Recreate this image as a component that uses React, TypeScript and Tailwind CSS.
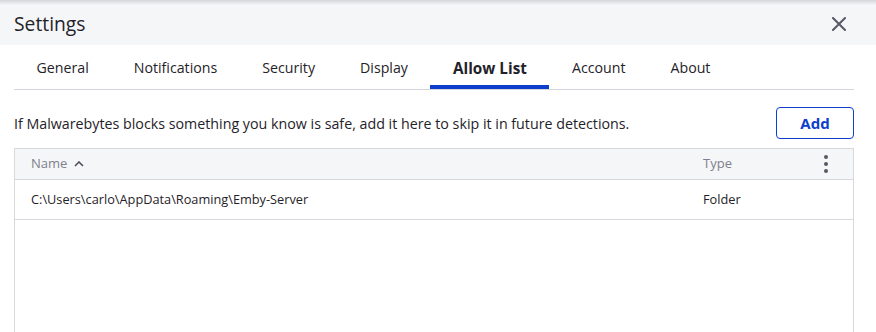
import React from "react";

export default function App() {
  const tabs = ["General", "Notifications", "Security", "Display", "Allow List", "Account", "About"];
  return (
    <div className="w-[876px] h-[332px] overflow-hidden bg-white text-[#1f2329]" style={{ fontFamily: '"Open Sans", "Noto Sans", sans-serif' }}>
      <div className="h-[45px] bg-[#f5f6f8] relative flex items-center justify-between pl-[14px] pr-[30px]">
        <div className="absolute left-0 right-0 top-0 h-[5px] bg-gradient-to-b from-[#d4d5d8] to-[#f5f6f8]" />
        <span className="text-[19.3px] pt-[4px]">Settings</span>
        <svg width="14" height="14" viewBox="0 0 14 14" className="mt-[3px]">
          <path d="M1 1 L13 13 M13 1 L1 13" stroke="#555a66" strokeWidth="2" strokeLinecap="square" />
        </svg>
      </div>
      <div className="px-[14px] pr-[22px]">
        <div className="flex border-b border-[#d3d4dc] h-[45px]">
          {tabs.map((t) => {
            const active = t === "Allow List";
            return (
              <div
                key={t}
                className={
                  "px-[22.5px] flex items-center border-b-4 " +
                  (active ? "border-[#0d3ecc] font-bold text-[15.3px]" : "border-transparent text-[14.2px]")
                }
              >
                <span className="pt-[6px]">{t}</span>
              </div>
            );
          })}
        </div>
        <div className="flex items-center justify-between mt-[17px]">
          <span className="text-[14.25px] pt-[2px]">If Malwarebytes blocks something you know is safe, add it here to skip it in future detections.</span>
          <button className="w-[78px] h-[32px] border border-[#0d3ecc] rounded-[4px] text-[#0d3ecc] font-bold text-[15px]">Add</button>
        </div>
        <div className="mt-[9px] border-x border-t border-[#d8d9de] h-[200px]">
          <div className="flex items-center h-[31px] bg-[#f5f6f8] border-b border-[#d8d9de] text-[13px] text-[#7d818b]">
            <div className="pl-[16px] flex-1 flex items-center gap-[7px]">
              <span>Name</span>
              <svg width="10" height="6" viewBox="0 0 10 6">
                <path d="M1 5 L5 1 L9 5" stroke="#4a4f5a" strokeWidth="1.6" fill="none" />
              </svg>
            </div>
            <div className="w-[96px]">Type</div>
            <div className="w-[54px] flex flex-col items-center gap-[3px]">
              <span className="w-[4px] h-[4px] rounded-full bg-[#555a66]" />
              <span className="w-[4px] h-[4px] rounded-full bg-[#555a66]" />
              <span className="w-[4px] h-[4px] rounded-full bg-[#555a66]" />
            </div>
          </div>
          <div className="flex items-center h-[40px] border-b border-[#d8d9de] text-[12.75px]">
            <div className="pl-[16px] flex-1 pt-[1px]">C:\Users\carlo\AppData\Roaming\Emby-Server</div>
            <div className="w-[150px] pt-[1px]">Folder</div>
          </div>
        </div>
      </div>
    </div>
  );
}
